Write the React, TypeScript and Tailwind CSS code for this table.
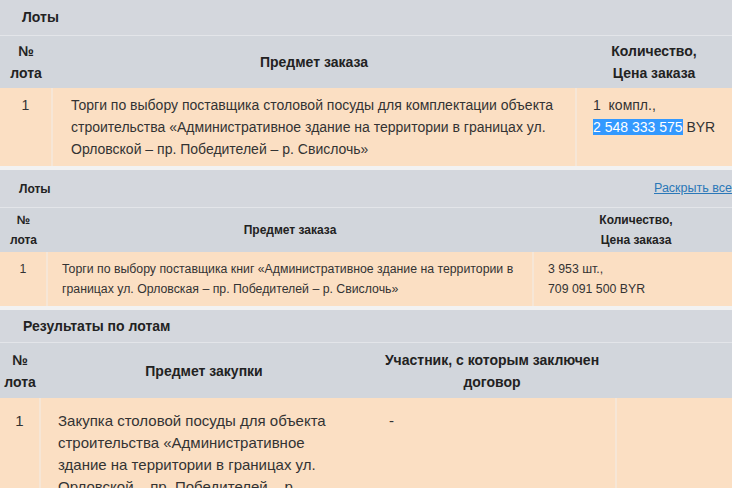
import React from "react";

const F = { fontFamily: '"Liberation Sans", Arial, sans-serif' };

function Sep() {
  return <div className="w-[2px] shrink-0 self-stretch bg-[#f6e6d6]" />;
}

export default function App() {
  return (
    <div className="w-[732px] h-[488px] overflow-hidden bg-white text-[#222]" style={F}>
      {/* Section 1 */}
      <div className="flex flex-col">
        <div className="h-[35px] bg-[#d4d7dd] flex items-center pl-[22px] text-[14px] font-bold">Лоты</div>
        <div className="h-[1px] bg-[#e3e5e9]" />
        <div className="h-[52px] bg-[#d2d6dc] flex text-[14px] leading-[22px] font-bold text-[#222]">
          <div className="w-[52px] shrink-0 flex flex-col items-center justify-center">
            <span>№</span>
            <span>лота</span>
          </div>
          <div className="w-[524px] shrink-0 flex items-center justify-center">Предмет заказа</div>
          <div className="flex-1 flex flex-col items-center justify-center">
            <span>Количество,</span>
            <span>Цена заказа</span>
          </div>
        </div>
        <div className="h-[78px] bg-[#fbdfc3] flex text-[14px] leading-[22px] text-[#333]">
          <div className="w-[51px] shrink-0 pt-[6px] flex justify-center">1</div>
          <Sep />
          <div className="w-[522px] shrink-0 pt-[6px] pl-[18px] whitespace-nowrap">
            <div>Торги по выбору поставщика столовой посуды для комплектации объекта</div>
            <div>строительства «Административное здание на территории в границах ул.</div>
            <div>Орловской – пр. Победителей – р. Свислочь»</div>
          </div>
          <Sep />
          <div className="flex-1 pt-[6px] pl-[16px] whitespace-pre">
            <div>1  компл.,</div>
            <div>
              <span className="bg-[#3399ff] text-white">2 548 333 575</span> BYR
            </div>
          </div>
        </div>
        <div className="h-[4px] bg-[#f2f2f2]" />
      </div>

      {/* Section 2 */}
      <div className="flex flex-col">
        <div className="h-[37px] bg-[#d4d7dd] flex items-center pl-[19px] text-[12px] font-bold overflow-hidden">
          <span className="w-[635px] shrink-0">Лоты</span>
          <span className="shrink-0 font-normal text-[12.5px] text-[#2b78b8] underline whitespace-nowrap">Раскрыть все</span>
        </div>
        <div className="h-[1px] bg-[#e3e5e9]" />
        <div className="h-[44px] bg-[#d2d6dc] flex text-[12px] leading-[20px] font-bold overflow-hidden">
          <div className="w-[47px] shrink-0 flex flex-col items-center justify-center">
            <span>№</span>
            <span>лота</span>
          </div>
          <div className="w-[486px] shrink-0 flex items-center justify-center">Предмет заказа</div>
          <div className="w-[206px] shrink-0 flex flex-col items-center justify-center">
            <span>Количество,</span>
            <span>Цена заказа</span>
          </div>
        </div>
        <div className="h-[54px] bg-[#fbdfc3] flex text-[12.3px] leading-[20px] text-[#333]">
          <div className="w-[46px] shrink-0 pt-[7px] flex justify-center">1</div>
          <Sep />
          <div className="w-[484px] shrink-0 pt-[7px] pl-[14px] whitespace-nowrap">
            <div>Торги по выбору поставщика книг «Административное здание на территории в</div>
            <div>границах ул. Орловская – пр. Победителей – р. Свислочь»</div>
          </div>
          <Sep />
          <div className="flex-1 pt-[7px] pl-[14px] whitespace-nowrap">
            <div>3 953 шт.,</div>
            <div>709 091 500 BYR</div>
          </div>
        </div>
        <div className="h-[4px] bg-[#f2f2f2]" />
      </div>

      {/* Section 3 */}
      <div className="flex flex-col">
        <div className="h-[32px] bg-[#d4d7dd] flex items-center pl-[23px] text-[14px] font-bold">Результаты по лотам</div>
        <div className="h-[1px] bg-[#e3e5e9]" />
        <div className="h-[55px] bg-[#d2d6dc] flex text-[14px] leading-[22px] font-bold">
          <div className="w-[40px] shrink-0 flex flex-col items-center justify-center">
            <span>№</span>
            <span>лота</span>
          </div>
          <div className="w-[328px] shrink-0 flex items-center justify-center">Предмет закупки</div>
          <div className="w-[248px] shrink-0 flex flex-col items-center justify-center whitespace-nowrap">
            <span>Участник, с которым заключен</span>
            <span>договор</span>
          </div>
          <div className="flex-1" />
        </div>
        <div className="h-[120px] bg-[#fbdfc3] flex text-[15px] leading-[22px] text-[#333]">
          <div className="w-[39px] shrink-0 pt-[12px] flex justify-center">1</div>
          <Sep />
          <div className="w-[326px] shrink-0 pt-[12px] pl-[17px] whitespace-nowrap">
            <div>Закупка столовой посуды для объекта</div>
            <div>строительства «Административное</div>
            <div>здание на территории в границах ул.</div>
            <div>Орловской – пр. Победителей – р.</div>
          </div>
          <div className="w-[248px] shrink-0 pt-[12px] pl-[22px]">-</div>
          <Sep />
          <div className="flex-1" />
        </div>
      </div>
    </div>
  );
}
